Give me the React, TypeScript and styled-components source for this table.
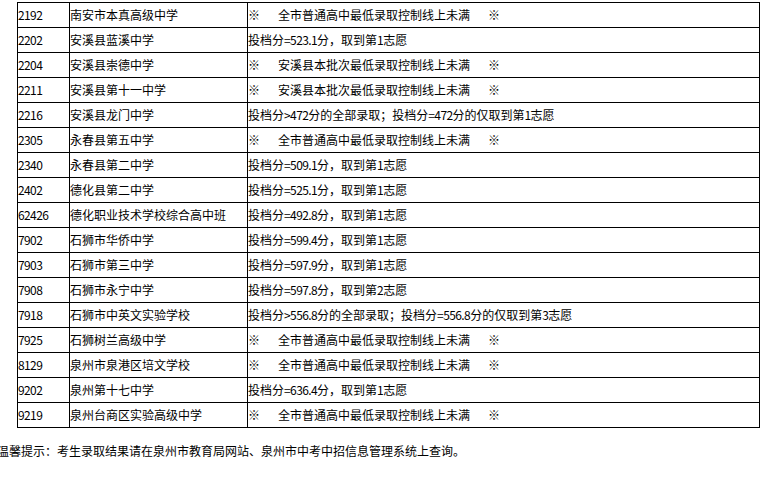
import React from 'react';
import styled, { createGlobalStyle } from 'styled-components';

const GlobalStyle = createGlobalStyle`
  html, body {
    margin: 0;
    padding: 0;
    background: #ffffff;
  }
  body {
    font-family: "Noto Sans CJK SC", "Noto Sans", sans-serif;
    font-size: 12px;
    color: #000000;
    overflow: hidden;
  }
`;

const Page = styled.div`
  width: 765px;
  height: 477px;
  padding-top: 2px;
  box-sizing: border-box;
  overflow: hidden;
`;

const Table = styled.table`
  margin-left: 17px;
  border-collapse: collapse;
  table-layout: fixed;
`;

const Cell = styled.td<{ $w: number }>`
  width: ${(p) => p.$w}px;
  height: 24px;
  padding: 0;
  border: 1px solid #000000;
  font-size: 12px;
  line-height: 24px;
  white-space: nowrap;
  overflow: hidden;
  vertical-align: middle;
`;

const Gap = styled.span`
  display: inline-block;
  width: 18px;
`;

// half-width run, squeezed to the 6px advance of the original page
const Ascii = styled.span`
  letter-spacing: -0.6px;
`;

const Footer = styled.p`
  margin: 13px 0 0 -3px;
  font-size: 12px;
  line-height: 20px;
  white-space: nowrap;
`;

type Row = { code: string; school: string; note: string; flag?: boolean };

const rows: Row[] = [
  { code: '2192', school: '南安市本真高级中学', note: '全市普通高中最低录取控制线上未满', flag: true },
  { code: '2202', school: '安溪县蓝溪中学', note: '投档分=523.1分，取到第1志愿' },
  { code: '2204', school: '安溪县崇德中学', note: '安溪县本批次最低录取控制线上未满', flag: true },
  { code: '2211', school: '安溪县第十一中学', note: '安溪县本批次最低录取控制线上未满', flag: true },
  { code: '2216', school: '安溪县龙门中学', note: '投档分>472分的全部录取；投档分=472分的仅取到第1志愿' },
  { code: '2305', school: '永春县第五中学', note: '全市普通高中最低录取控制线上未满', flag: true },
  { code: '2340', school: '永春县第二中学', note: '投档分=509.1分，取到第1志愿' },
  { code: '2402', school: '德化县第二中学', note: '投档分=525.1分，取到第1志愿' },
  { code: '62426', school: '德化职业技术学校综合高中班', note: '投档分=492.8分，取到第1志愿' },
  { code: '7902', school: '石狮市华侨中学', note: '投档分=599.4分，取到第1志愿' },
  { code: '7903', school: '石狮市第三中学', note: '投档分=597.9分，取到第1志愿' },
  { code: '7908', school: '石狮市永宁中学', note: '投档分=597.8分，取到第2志愿' },
  { code: '7918', school: '石狮市中英文实验学校', note: '投档分>556.8分的全部录取；投档分=556.8分的仅取到第3志愿' },
  { code: '7925', school: '石狮树兰高级中学', note: '全市普通高中最低录取控制线上未满', flag: true },
  { code: '8129', school: '泉州市泉港区培文学校', note: '全市普通高中最低录取控制线上未满', flag: true },
  { code: '9202', school: '泉州第十七中学', note: '投档分=636.4分，取到第1志愿' },
  { code: '9219', school: '泉州台商区实验高级中学', note: '全市普通高中最低录取控制线上未满', flag: true },
];

const mixed = (text: string) =>
  text.split(/([\x20-\x7e]+)/).map((part, i) =>
    /^[\x20-\x7e]+$/.test(part) ? <Ascii key={i}>{part}</Ascii> : part
  );

const App = () => {
  return (
    <Page>
      <GlobalStyle />
      <Table>
        <tbody>
          {rows.map((r) => (
            <tr key={r.code}>
              <Cell $w={51}>{mixed(r.code)}</Cell>
              <Cell $w={177}>{r.school}</Cell>
              <Cell $w={511}>
                {r.flag ? (
                  <>
                    ※<Gap />
                    {r.note}
                    <Gap />※
                  </>
                ) : (
                  mixed(r.note)
                )}
              </Cell>
            </tr>
          ))}
        </tbody>
      </Table>
      <Footer>温馨提示：考生录取结果请在泉州市教育局网站、泉州市中考中招信息管理系统上查询。</Footer>
    </Page>
  );
};

export default App;
